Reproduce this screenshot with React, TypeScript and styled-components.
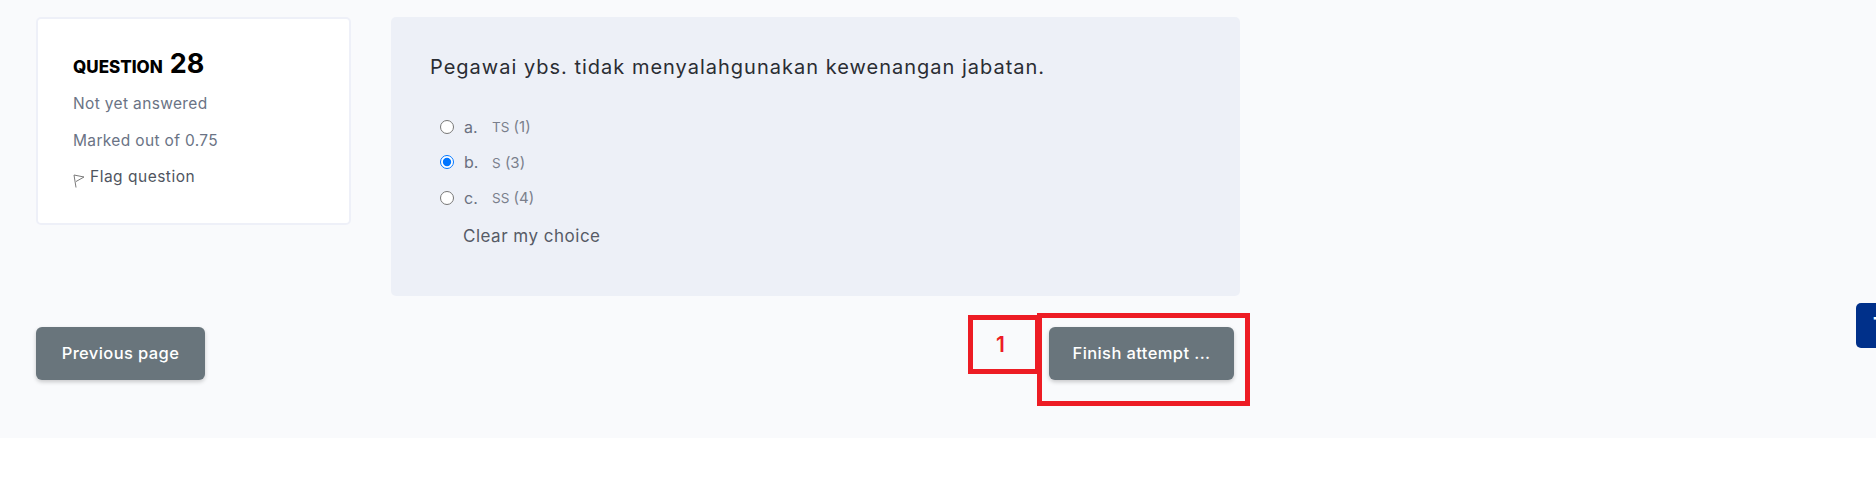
import React from 'react';
import styled, { createGlobalStyle } from 'styled-components';

const GlobalStyle = createGlobalStyle`
  html, body {
    margin: 0;
    background: #ffffff;
    overflow: hidden;
  }

  body {
    font-family: Inter, "Noto Sans", "Liberation Sans", sans-serif;
  }
`;

const Page = styled.div`
  background: #f9fafc;
  box-sizing: border-box;
  height: 438px;
  padding: 17px 36px 0;
  position: relative;
  width: 1876px;
`;

const QuestionRow = styled.div`
  align-items: flex-start;
  display: flex;
  gap: 40px;
`;

const InfoCard = styled.aside`
  background: #ffffff;
  border: 2px solid #eef0f8;
  border-radius: 5px;
  box-sizing: border-box;
  display: flex;
  flex-direction: column;
  height: 208px;
  padding: 28px 35px;
  width: 315px;
`;

const QuestionTitle = styled.h3`
  align-items: baseline;
  color: #000000;
  display: flex;
  font-size: 17px;
  font-weight: 800;
  gap: 7px;
  line-height: 34px;
  margin: 0 0 9px;
  text-transform: uppercase;
`;

const QuestionNumber = styled.span`
  font-size: 27px;
  font-weight: 700;
`;

const InfoText = styled.div`
  color: #6a7385;
  font-size: 15.5px;
  letter-spacing: 0.35px;
  line-height: 22px;
  margin-bottom: 14.5px;
`;

const FlagLink = styled.a`
  align-items: center;
  color: #4f5560;
  display: flex;
  font-size: 15.5px;
  gap: 5px;
  letter-spacing: 0.5px;
  line-height: 22px;
`;

const FlagIcon = styled.svg`
  flex: none;
  margin-top: 8px;
`;

const ContentPanel = styled.section`
  background: #edf0f7;
  border-radius: 5px;
  box-sizing: border-box;
  height: 279px;
  padding: 35px 39px;
  width: 849px;
`;

const Prompt = styled.p`
  color: #2a2d33;
  font-size: 20px;
  letter-spacing: 1px;
  line-height: 30px;
  margin: 0 0 34px;
`;

const AnswerList = styled.div`
  display: flex;
  flex-direction: column;
  gap: 14.5px;
  padding-left: 10px;
`;

const AnswerRow = styled.label`
  align-items: center;
  color: #6a7080;
  display: flex;
  height: 21px;
`;

const Radio = styled.input`
  height: 14px;
  margin: 0 10px 0 0;
  width: 14px;
`;

const AnswerLetter = styled.span`
  font-size: 16px;
  width: 28px;
`;

const AnswerText = styled.span`
  color: #7a7f8c;
  font-size: 15px;

  small {
    font-size: 13.5px;
  }
`;

const ClearChoice = styled.a`
  color: #565b66;
  display: block;
  font-size: 17px;
  letter-spacing: 0.5px;
  line-height: 24px;
  margin: 16px 0 0 33px;
`;

const ActionRow = styled.div`
  display: flex;
  justify-content: space-between;
  margin-top: 31px;
  width: 1198px;
`;

const ActionButton = styled.button`
  background: #69757c;
  border: none;
  border-radius: 6px;
  box-shadow: 0 2px 4px rgba(0, 0, 0, 0.2);
  color: #ffffff;
  font-family: inherit;
  font-size: 16.5px;
  font-weight: 500;
  height: 53px;
  letter-spacing: 0.4px;
  padding: 0 0 2px;
  width: ${(props: { $width: number }) => props.$width}px;
`;

const PageBox = styled.div`
  align-items: center;
  border: 5px solid #ed1c24;
  box-sizing: border-box;
  color: #ed1c24;
  display: flex;
  font-size: 21px;
  font-weight: 600;
  height: 59px;
  justify-content: center;
  left: 968px;
  padding: 0 7px 1px 0;
  position: absolute;
  top: 315px;
  width: 72px;
`;

const ButtonBox = styled.div`
  border: 5px solid #ed1c24;
  box-sizing: border-box;
  height: 93px;
  left: 1037px;
  position: absolute;
  top: 313px;
  width: 213px;
`;

const SideTab = styled.div`
  background: #00308a;
  border-radius: 5px 0 0 5px;
  box-sizing: border-box;
  color: #ffffff;
  font-size: 20px;
  font-weight: 700;
  height: 45px;
  left: 1856px;
  line-height: 45px;
  overflow: hidden;
  padding-left: 17px;
  position: absolute;
  top: 303px;
  width: 20px;
`;

const answers = [
  { letter: 'a.', code: 'TS', score: '(1)', checked: false },
  { letter: 'b.', code: 'S', score: '(3)', checked: true },
  { letter: 'c.', code: 'SS', score: '(4)', checked: false },
];

export default function App() {
  return (
    <Page>
      <GlobalStyle />
      <QuestionRow>
        <InfoCard>
          <QuestionTitle>
            Question
            <QuestionNumber>28</QuestionNumber>
          </QuestionTitle>
          <InfoText>Not yet answered</InfoText>
          <InfoText>Marked out of 0.75</InfoText>
          <FlagLink>
            <FlagIcon width="12" height="14" viewBox="0 0 12 14" fill="none" stroke="#7a7a7a" strokeWidth="1">
              <path d="M1 1 L11 3 L3 7.5" />
              <path d="M1 1 L3 13.5" />
            </FlagIcon>
            Flag question
          </FlagLink>
        </InfoCard>
        <ContentPanel>
          <Prompt>Pegawai ybs. tidak menyalahgunakan kewenangan jabatan.</Prompt>
          <AnswerList>
            {answers.map((answer) => (
              <AnswerRow key={answer.letter}>
                <Radio type="radio" name="q28" defaultChecked={answer.checked} />
                <AnswerLetter>{answer.letter}</AnswerLetter>
                <AnswerText>
                  <small>{answer.code}</small>
                  {' '}
                  {answer.score}
                </AnswerText>
              </AnswerRow>
            ))}
          </AnswerList>
          <ClearChoice>Clear my choice</ClearChoice>
        </ContentPanel>
      </QuestionRow>
      <ActionRow>
        <ActionButton $width={169}>Previous page</ActionButton>
        <ActionButton $width={185}>Finish attempt ...</ActionButton>
      </ActionRow>
      <PageBox>1</PageBox>
      <ButtonBox />
      <SideTab>T</SideTab>
    </Page>
  );
}
